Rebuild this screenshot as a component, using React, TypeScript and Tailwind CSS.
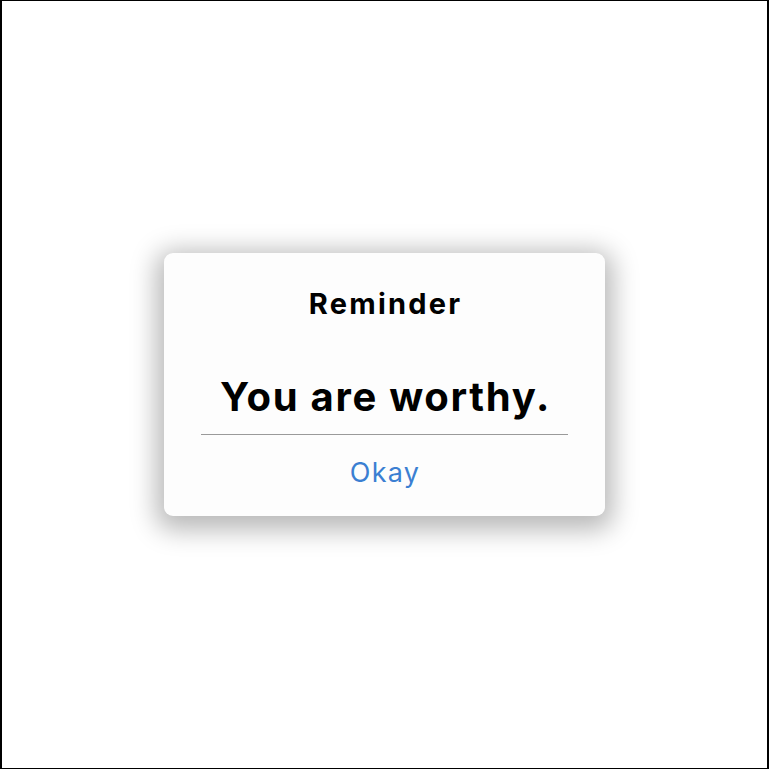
export default function App() {
    return (
        <div className="h-[769px] w-full border-t border-b border-l-2 border-r-2 border-black bg-white flex items-center justify-center" style={{ fontFamily: 'Inter, "Liberation Sans", sans-serif' }}>
            {/* Alert card */}
            <div className="w-[441px] h-[263px] bg-[#fdfdfd] rounded-[9px] shadow-[0_6px_26px_8px_rgba(0,0,0,0.28)] flex flex-col items-center">
                <h2 className="mt-[35px] pl-[2px] text-[29px] leading-[32px] font-bold text-black tracking-[2.2px]">Reminder</h2>
                <p className="mt-[53px] pl-[2px] text-[40px] leading-[48px] font-bold text-black tracking-[1.7px]">You are worthy.</p>
                <div className="mt-[13px] w-[367px] h-px bg-[#9a9a9a]" />
                <button className="mt-[22px] pl-[1px] text-[27px] leading-[32px] text-[#3b7fd2] tracking-[1.3px]">Okay</button>
            </div>
        </div>
    );
}
